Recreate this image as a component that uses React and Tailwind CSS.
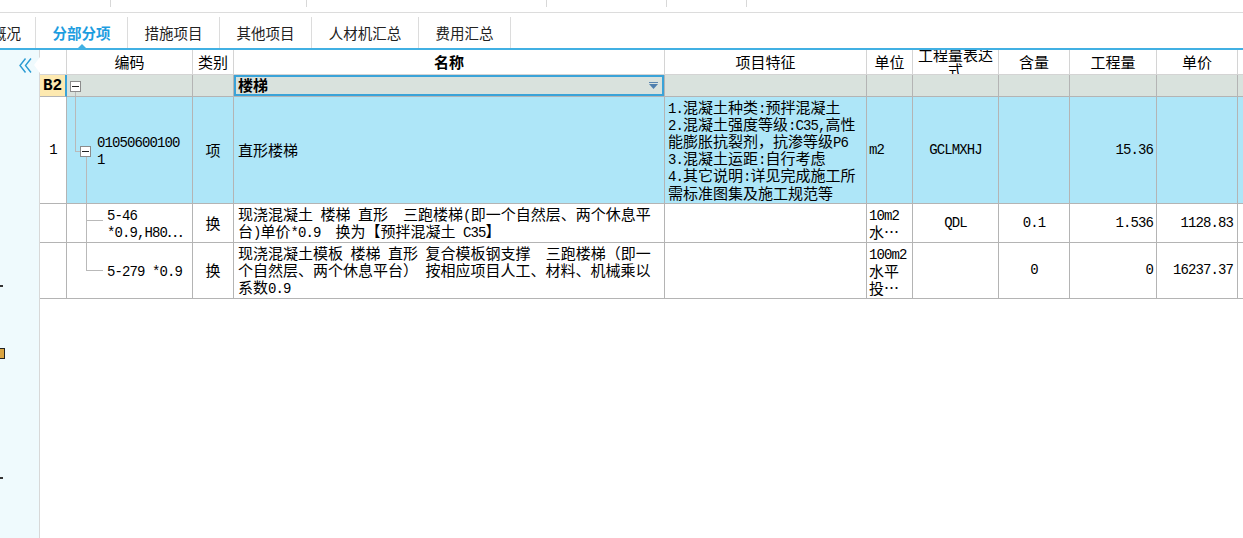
import React from 'react';

const MONO = "font-['Liberation_Mono',monospace] text-[14px] tracking-[-0.9px]";
const LINE = 'absolute bg-[#b9b9b9]';

function Txt({ s }) {
  const parts = s.split(/([\x20-\x7e]+)/);
  return parts.map((p, i) =>
    /^[\x20-\x7e]+$/.test(p) ? (
      <span key={i} className={MONO}>{p}</span>
    ) : (
      <React.Fragment key={i}>{p}</React.Fragment>
    )
  );
}

function Lines({ lines, className = '' }) {
  return (
    <div className={`whitespace-pre ${className}`}>
      {lines.map((l, i) => (
        <div key={i} className="flex h-[17px] items-center leading-[17px]">
          <span><Txt s={l} /></span>
        </div>
      ))}
    </div>
  );
}

function Cell({ className = '', children }) {
  return (
    <div className={`relative flex items-center overflow-hidden border-r border-b border-[#b4b4b4] ${className}`}>
      {children}
    </div>
  );
}

function Head({ className = '', children }) {
  return (
    <div className={`flex items-center justify-center overflow-hidden border-r border-b border-[#d4d4d4] bg-white text-center ${className}`}>
      {children}
    </div>
  );
}

function TreeBox({ className = '' }) {
  return (
    <span className={`absolute flex h-[11px] w-[11px] items-center justify-center border border-[#8c8c8c] bg-white ${className}`}>
      <span className="h-px w-[7px] bg-[#222]" />
    </span>
  );
}

const tabs = [
  { label: '概况', w: 'w-[58px] -ml-[22px]' },
  { label: '分部分项', w: 'w-[92px]', active: true },
  { label: '措施项目', w: 'w-[92px]' },
  { label: '其他项目', w: 'w-[92px]' },
  { label: '人材机汇总', w: 'w-[107px]' },
  { label: '费用汇总', w: 'w-[92px]' },
];

export default function App() {
  return (
    <div className="flex h-screen w-full flex-col overflow-hidden bg-white font-['Noto_Sans_CJK_SC',sans-serif] text-[15px] text-black">
      {/* top strip */}
      <div className="flex h-[13px] shrink-0 border-b border-[#dcdcdc]">
        <div className="w-[110px]" />
        <div className="h-[7px] w-[196px] border-l border-[#d8d8d8]" />
        <div className="h-[7px] w-[240px] border-l border-[#d8d8d8]" />
        <div className="h-[7px] w-[120px] border-l border-[#d8d8d8]" />
        <div className="h-[7px] w-[80px] border-l border-[#d8d8d8]" />
        <div className="h-[7px] w-[80px] border-l border-[#d8d8d8]" />
      </div>

      {/* tabs */}
      <div className="flex h-[35px] shrink-0 items-end">
        {tabs.map((t) => (
          <div
            key={t.label}
            className={`relative flex h-[31px] shrink-0 items-center justify-center border-r border-[#dcdcdc] text-[14.5px] ${t.w} ${t.active ? 'font-bold text-[#1e9de0]' : 'text-[#222]'}`}
          >
            {t.label}
            {t.active && (
              <span className="absolute bottom-0 left-1/2 h-0 w-0 -translate-x-1/2 border-x-[4px] border-b-[4px] border-x-transparent border-b-[#41b0e3]" />
            )}
          </div>
        ))}
      </div>
      <div className="h-[2px] shrink-0 bg-[#41b0e3]" />

      <div className="flex min-h-0 flex-1">
        {/* sidebar */}
        <div className="flex w-[40px] shrink-0 flex-col border-r border-[#d8d8d8] bg-[#effafd]">
          <div className="mt-[7px] flex items-center">
            <svg className="ml-[19px]" width="13" height="15" viewBox="0 0 13 15">
              <polyline points="6.5,0.5 1,7.5 6.5,14.5" fill="none" stroke="#2a9bd3" strokeWidth="1.4" />
              <polyline points="12,0.5 6.5,7.5 12,14.5" fill="none" stroke="#2a9bd3" strokeWidth="1.4" />
            </svg>
            <svg className="ml-auto -mr-px" width="7" height="16" viewBox="0 0 7 16">
              <polygon points="7,0 1,8 7,16" fill="#ffffff" />
            </svg>
          </div>
          <div className="mt-[212px] h-[2px] w-[3px] bg-[#333]" />
          <div className="mt-[61px] h-[11px] w-[5px] border-y border-r border-[#222] bg-[#d9a441]" />
          <div className="mt-[118px] h-[2px] w-[3px] bg-[#333]" />
        </div>

        {/* grid */}
        <div className="min-w-0 flex-1 overflow-hidden">
          <div className="grid w-max grid-cols-[27px_126px_41px_431px_202px_46px_86px_71px_87px_81px_80px] grid-rows-[25px_22px_107px_39px_56px]">
            {/* header */}
            <Head />
            <Head>编码</Head>
            <Head>类别</Head>
            <Head className="bg-[#fdefb6] font-bold">名称</Head>
            <Head>项目特征</Head>
            <Head>单位</Head>
            <Head className="leading-[15px]">
              <div>工程量表达<br />式</div>
            </Head>
            <Head>含量</Head>
            <Head>工程量</Head>
            <Head>单价</Head>
            <Head />

            {/* B2 row */}
            <Cell className="justify-center border-r-2 border-r-[#3aa3d8] bg-[#fde9b0] font-['Liberation_Mono',monospace] text-[16px] font-bold">
              B2
            </Cell>
            <Cell className="bg-[#d9e2dd]">
              <TreeBox className="left-[3px] top-[6px]" />
              <span className={`${LINE} left-[8px] top-[17px] h-[10px] w-px`} />
            </Cell>
            <Cell className="bg-[#d9e2dd]" />
            <Cell className="justify-between bg-[#d9e2dd] pl-[4px] font-bold shadow-[inset_0_0_0_2px_#3aa3d8]">
              <span>楼梯</span>
              <svg className="mr-[6px]" width="9" height="7" viewBox="0 0 9 7">
                <rect x="0" y="0" width="9" height="1" fill="#5a86b0" />
                <polygon points="0,2 9,2 4.5,7" fill="#4f7fae" />
              </svg>
            </Cell>
            <Cell className="bg-[#d9e2dd]" />
            <Cell className="bg-[#d9e2dd]" />
            <Cell className="bg-[#d9e2dd]" />
            <Cell className="bg-[#d9e2dd]" />
            <Cell className="bg-[#d9e2dd]" />
            <Cell className="bg-[#d9e2dd]" />
            <Cell className="bg-[#d9e2dd]" />

            {/* row 1 */}
            <Cell className="justify-center bg-white">
              <Txt s="1" />
            </Cell>
            <Cell className="bg-[#aee6f8]">
              <span className={`${LINE} left-[8px] top-0 h-[54px] w-px`} />
              <span className={`${LINE} left-[8px] top-[54px] h-px w-[5px]`} />
              <TreeBox className="left-[13px] top-[49px]" />
              <span className={`${LINE} left-[19px] top-[60px] h-[60px] w-px`} />
              <Lines className="ml-[30px]" lines={['01050600100', '1']} />
            </Cell>
            <Cell className="justify-center bg-[#aee6f8]">项</Cell>
            <Cell className="bg-[#aee6f8] pl-[4px]">直形楼梯</Cell>
            <Cell className="bg-[#aee6f8] pl-[3px]">
              <Lines
                lines={[
                  '1.混凝土种类:预拌混凝土',
                  '2.混凝土强度等级:C35,高性',
                  '能膨胀抗裂剂，抗渗等级P6',
                  '3.混凝土运距:自行考虑',
                  '4.其它说明:详见完成施工所',
                  '需标准图集及施工规范等',
                ]}
              />
            </Cell>
            <Cell className="bg-[#aee6f8] pl-[2px]"><Txt s="m2" /></Cell>
            <Cell className="justify-center bg-[#aee6f8]"><Txt s="GCLMXHJ" /></Cell>
            <Cell className="bg-[#aee6f8]" />
            <Cell className="justify-end bg-[#aee6f8] pr-[3px]"><Txt s="15.36" /></Cell>
            <Cell className="bg-[#aee6f8]" />
            <Cell className="bg-[#aee6f8]" />

            {/* row 2 */}
            <Cell className="bg-white" />
            <Cell className="bg-white">
              <span className={`${LINE} left-[19px] top-0 h-full w-px`} />
              <span className={`${LINE} left-[19px] top-[16px] h-px w-[17px]`} />
              <Lines className="ml-[40px]" lines={['5-46', '*0.9,H80…']} />
            </Cell>
            <Cell className="justify-center bg-white">换</Cell>
            <Cell className="bg-white pl-[4px]">
              <Lines
                lines={[
                  '现浇混凝土 楼梯 直形  三跑楼梯(即一个自然层、两个休息平',
                  '台)单价*0.9  换为【预拌混凝土 C35】',
                ]}
              />
            </Cell>
            <Cell className="bg-white" />
            <Cell className="bg-white pl-[2px]">
              <Lines lines={['10m2', '水…']} />
            </Cell>
            <Cell className="justify-center bg-white"><Txt s="QDL" /></Cell>
            <Cell className="justify-center bg-white"><Txt s="0.1" /></Cell>
            <Cell className="justify-end bg-white pr-[3px]"><Txt s="1.536" /></Cell>
            <Cell className="justify-end bg-white pr-[4px]"><Txt s="1128.83" /></Cell>
            <Cell className="bg-white" />

            {/* row 3 */}
            <Cell className="bg-white" />
            <Cell className="bg-white">
              <span className={`${LINE} left-[19px] top-0 h-[27px] w-px`} />
              <span className={`${LINE} left-[19px] top-[27px] h-px w-[17px]`} />
              <Lines className="ml-[40px]" lines={['5-279 *0.9']} />
            </Cell>
            <Cell className="justify-center bg-white">换</Cell>
            <Cell className="bg-white pl-[4px]">
              <Lines
                lines={[
                  '现浇混凝土模板 楼梯 直形 复合模板钢支撑  三跑楼梯（即一',
                  '个自然层、两个休息平台） 按相应项目人工、材料、机械乘以',
                  '系数0.9',
                ]}
              />
            </Cell>
            <Cell className="bg-white" />
            <Cell className="bg-white pl-[2px]">
              <Lines lines={['100m2', '水平', '投…']} />
            </Cell>
            <Cell className="bg-white" />
            <Cell className="justify-center bg-white"><Txt s="0" /></Cell>
            <Cell className="justify-end bg-white pr-[3px]"><Txt s="0" /></Cell>
            <Cell className="justify-end bg-white pr-[4px]"><Txt s="16237.37" /></Cell>
            <Cell className="bg-white" />
          </div>
        </div>
      </div>
    </div>
  );
}
